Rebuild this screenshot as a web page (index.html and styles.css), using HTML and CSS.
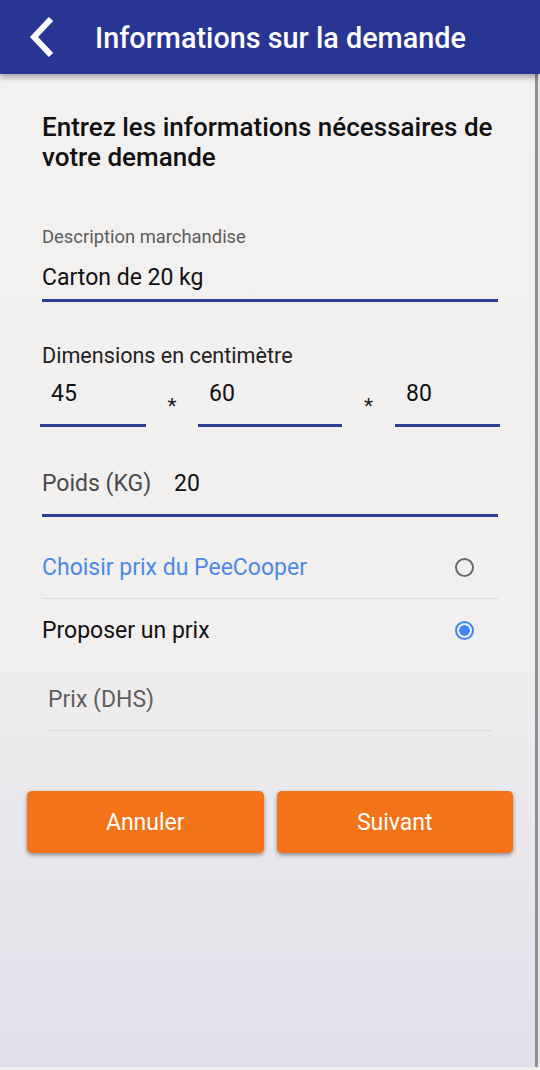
FILE: index.html
```html
<!DOCTYPE html>
<html lang="fr">
<head>
  <meta charset="UTF-8">
  <meta name="viewport" content="width=device-width, initial-scale=1.0">
  <title>Informations sur la demande</title>
  <link rel="stylesheet" href="styles.css">
</head>
<body>
  <header class="appbar">
    <svg class="back" width="40" height="74" viewBox="20 0 40 74">
      <path d="M51 19 L34 37 L51 55" fill="none" stroke="#fff" stroke-width="6"/>
    </svg>
    <h1 class="appbar-title">Informations sur la demande</h1>
  </header>

  <main class="page">
    <h2 class="intro">Entrez les informations nécessaires de votre demande</h2>

    <div class="field">
      <div class="field-label">Description marchandise</div>
      <div class="field-value">Carton de 20 kg</div>
    </div>

    <div class="dims-label">Dimensions en centimètre</div>
    <div class="dims">
      <div class="dim dim-a">45</div>
      <span class="star">*</span>
      <div class="dim dim-b">60</div>
      <span class="star">*</span>
      <div class="dim dim-c">80</div>
    </div>

    <div class="field inline">
      <span class="inline-label">Poids (KG)</span>
      <span class="inline-value">20</span>
    </div>

    <div class="option option-first">
      <span class="option-text blue">Choisir prix du PeeCooper</span>
      <span class="radio"></span>
    </div>
    <div class="option">
      <span class="option-text">Proposer un prix</span>
      <span class="radio checked"></span>
    </div>

    <div class="price">Prix (DHS)</div>

    <div class="actions">
      <button class="btn" type="button">Annuler</button>
      <button class="btn" type="button">Suivant</button>
    </div>
  </main>
</body>
</html>
```

FILE: styles.css
```css
body { margin: 0; width: 540px; height: 1070px; font-family: Roboto, "Noto Sans", sans-serif; background: #eeeeee; overflow: hidden; }

.appbar { position: relative; z-index: 2; height: 74px; display: flex; align-items: center; background: #283593; box-shadow: 0 3px 6px rgba(0, 0, 0, 0.35); }
.back { display: block; margin-left: 20px; }
.appbar-title { margin: 2px 0 0 35px; color: #fff; font-size: 28.8px; font-weight: 500; line-height: 32px; }

.page { box-sizing: border-box; height: 993px; margin-right: 2px; padding: 38px 37px 0 42px; border-right: 3px solid #908e9a; background: linear-gradient(#f3f0f0 0%, #f2efef 55%, #e1dfea 100%); }

.intro { margin: 0; width: 460px; font-size: 26px; font-weight: 500; line-height: 30px; color: #111; }

.field { margin-top: 55px; padding-bottom: 7px; border-bottom: 3px solid #2e3f96; }
.field-label { font-size: 18.4px; line-height: 20px; color: #5c5c5c; }
.field-value { margin-top: 17px; font-size: 23px; line-height: 28px; color: #111; }

.dims-label { margin-top: 42px; font-size: 21.6px; line-height: 24px; color: #222; }
.dims { display: flex; align-items: flex-start; margin: 12px -2px 0 -2px; }
.dim { box-sizing: border-box; padding: 0 0 16px 11px; font-size: 23px; line-height: 28px; color: #111; border-bottom: 3px solid #2e3f96; }
.dim-a { width: 106px; }
.dim-b { width: 144px; }
.dim-c { width: 105px; }
.star { width: 52px; padding-top: 12px; text-align: center; font-size: 21px; line-height: 28px; color: #222; }
.dims .star:nth-child(4) { width: 53px; }

.field.inline { margin-top: 44px; padding-bottom: 17px; font-size: 23px; line-height: 26px; }
.inline-label { color: #4a4a4a; }
.inline-value { margin-left: 17px; color: #111; }

.option { display: flex; align-items: center; justify-content: space-between; height: 62px; }
.option-first { margin-top: 19px; border-bottom: 1px solid #dcdada; }
.option-text { font-size: 23px; color: #111; }
.option-text.blue { color: #4a8ae6; }
.radio { box-sizing: border-box; width: 19px; height: 19px; margin-right: 24px; border: 2px solid #6a6868; border-radius: 50%; }
.radio.checked { border-color: #3f86f2; background: radial-gradient(circle, #3f86f2 0 5px, transparent 5.5px); }

.price { margin: 26px 6px 0 6px; padding-bottom: 17px; font-size: 23px; line-height: 26px; color: #5e5e5e; border-bottom: 1px solid #dcdada; }

.actions { display: flex; gap: 13px; margin: 60px -15px 0 -15px; }
.btn { flex: 1; height: 62px; border: none; border-radius: 5px; background: #f47318; color: #fff; font-family: Roboto, "Noto Sans", sans-serif; font-size: 23px; box-shadow: 0 2px 4px rgba(0, 0, 0, 0.4); cursor: pointer; }
```
